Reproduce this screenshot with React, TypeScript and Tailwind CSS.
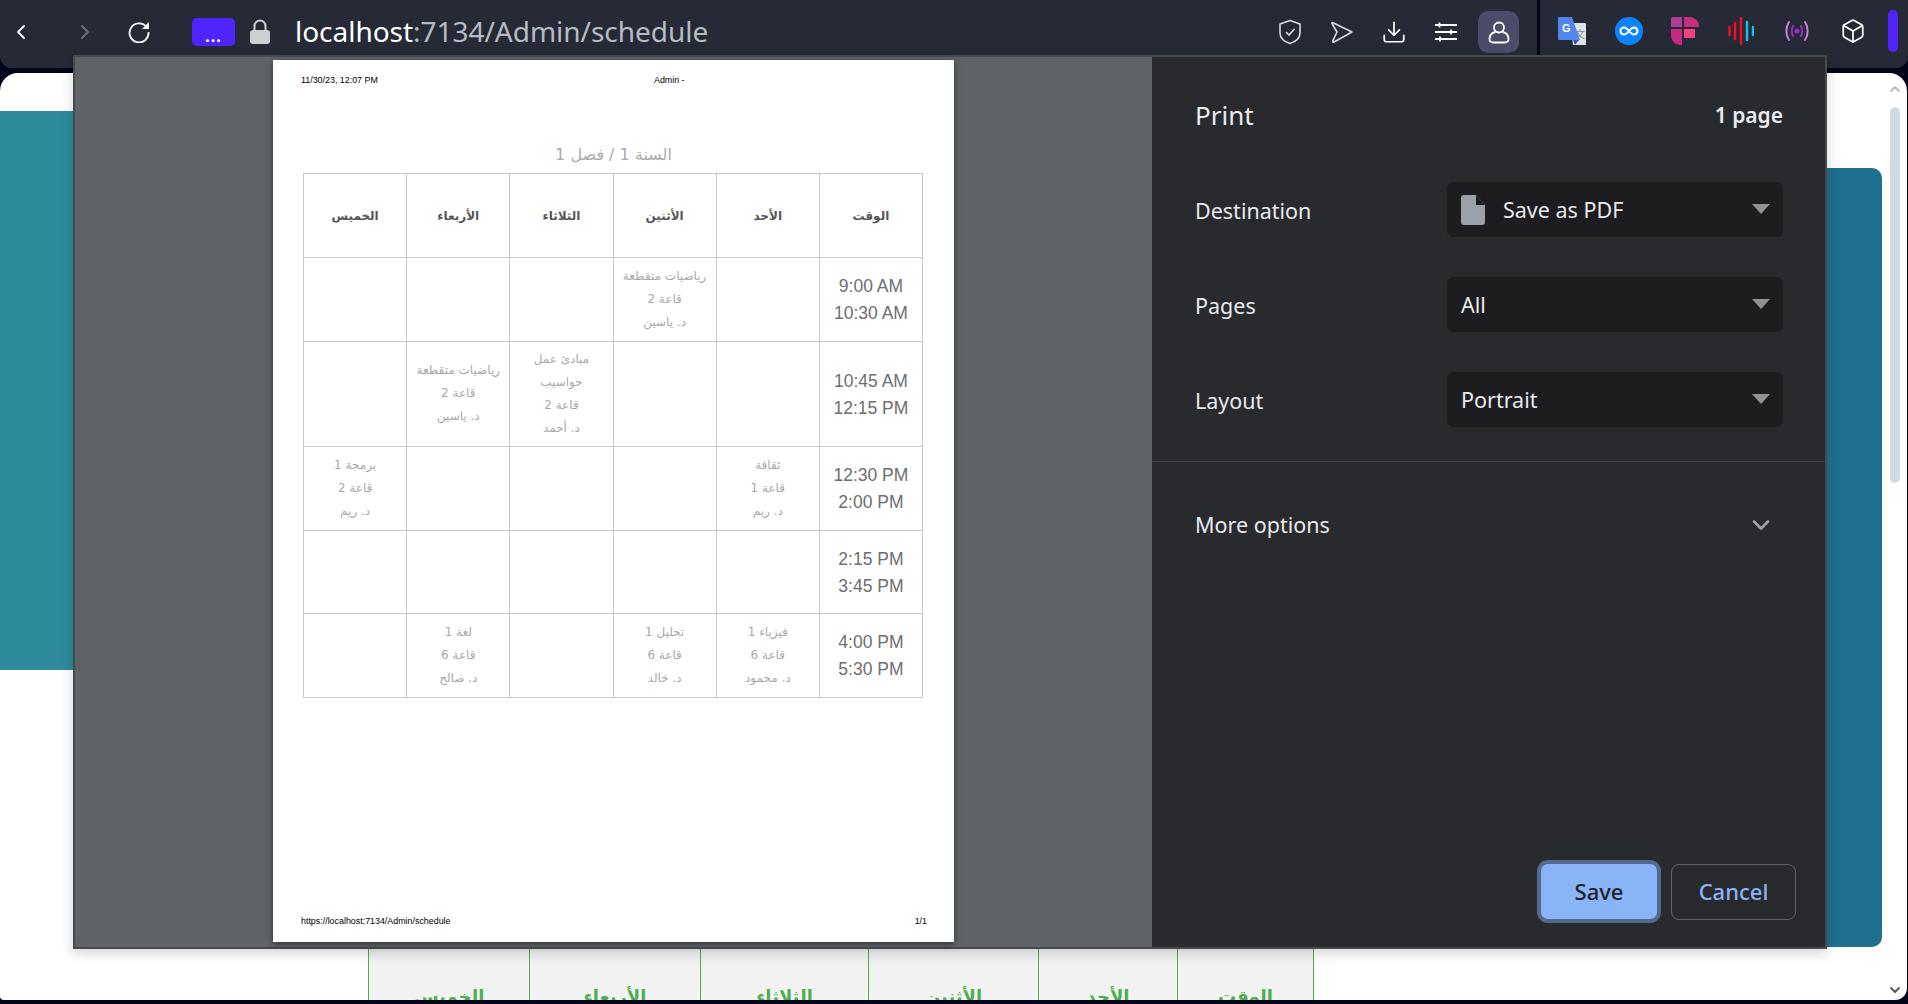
import { Box, ChevronDown, ChevronLeft, ChevronRight, ChevronUp, Download } from "lucide-react";

interface IRow {
  from: string;
  to: string;
  height: string;
  cells: string[][];
}

const days = ["الوقت", "الأحد", "الأثنين", "الثلاثاء", "الأربعاء", "الخميس"];

const rows: IRow[] = [
  {
    from: "9:00 AM",
    to: "10:30 AM",
    height: "h-[84px]",
    cells: [[], ["رياضيات متقطعة", "قاعة 2", "د. ياسين"], [], [], []],
  },
  {
    from: "10:45 AM",
    to: "12:15 PM",
    height: "h-[105px]",
    cells: [[], [], ["مبادئ عمل", "حواسيب", "قاعة 2", "د. أحمد"], ["رياضيات متقطعة", "قاعة 2", "د. ياسين"], []],
  },
  {
    from: "12:30 PM",
    to: "2:00 PM",
    height: "h-[84px]",
    cells: [["ثقافة", "قاعة 1", "د. ريم"], [], [], [], ["برمجة 1", "قاعة 2", "د. ريم"]],
  },
  {
    from: "2:15 PM",
    to: "3:45 PM",
    height: "h-[83px]",
    cells: [[], [], [], [], []],
  },
  {
    from: "4:00 PM",
    to: "5:30 PM",
    height: "h-[84px]",
    cells: [["فيزياء 1", "قاعة 6", "د. محمود"], ["تحليل 1", "قاعة 6", "د. خالد"], [], ["لغة 1", "قاعة 6", "د. صالح"], []],
  },
];

const bottomHeads = [
  { label: "الوقت", width: "w-[136px]" },
  { label: "الأحد", width: "w-[139px]" },
  { label: "الأثنين", width: "w-[170px]" },
  { label: "الثلاثاء", width: "w-[168px]" },
  { label: "الأربعاء", width: "w-[171px]" },
  { label: "الخميس", width: "w-[161px]" },
];

const Toolbar = () => (
  <div className="flex h-[68px] w-full gap-[3px]">
    <div className="flex h-full w-[1537px] items-center rounded-br-[10px] rounded-bl-[12px] bg-[#262a36] pb-[4px]">
      <ChevronLeft className="ml-[9px] h-[24px] w-[24px] text-white" strokeWidth={1.8} />
      <ChevronRight className="ml-[40px] h-[24px] w-[24px] text-[#70747c]" strokeWidth={1.8} />
      <svg className="ml-[31px] h-[22px] w-[22px]" viewBox="0 0 22 22" fill="none">
        <path d="M18.5 6A9.5 9.5 0 1 0 20.5 11" stroke="#ffffff" strokeWidth="1.8" />
        <path d="M21 1v7h-7z" fill="#ffffff" />
      </svg>
      <div className="ml-[42px] flex h-[28px] w-[43px] items-end justify-center rounded-[5px] bg-[#4f24ff] pb-[2px] text-[16px] leading-[16px] font-bold tracking-[1px] text-white">
        ...
      </div>
      <svg className="ml-[14px] h-[26px] w-[22px]" viewBox="0 0 22 26">
        <path d="M5.5 12V7a5.5 5.5 0 0 1 11 0v5" fill="none" stroke="#cdd1d3" strokeWidth="2" />
        <rect x="1" y="11" width="20" height="14" rx="3" fill="#cdd1d3" />
      </svg>
      <div className="mt-[-2px] ml-[24px] font-['Noto_Sans',sans-serif] text-[28px] leading-[36px] tracking-[-0.03px] text-[#b4bcc4]">
        <span className="text-white">localhost</span>:7134/Admin/schedule
      </div>
      <svg className="ml-auto h-[26px] w-[24px]" viewBox="0 0 24 26" fill="none" stroke="#d9dbde" strokeWidth="1.6">
        <path d="M12 1.5 22 5v9c0 5-4 8.5-10 10.5C6 22.5 2 19 2 14V5z" strokeLinejoin="round" />
        <path d="m8 13 3 3 5.5-6" />
      </svg>
      <svg className="ml-[28px] h-[24px] w-[24px]" viewBox="0 0 24 24" fill="none" stroke="#d9dbde" strokeWidth="1.6">
        <path d="M2.5 2.5 22 12 4 22c-1 .4-1.6-.4-1.2-1.2L7 12 2 3.5c-.3-.7 0-1.2.5-1z" strokeLinejoin="round" />
      </svg>
      <Download className="ml-[27px] h-[26px] w-[26px] text-white" strokeWidth={1.6} />
      <svg className="ml-[27px] h-[24px] w-[24px]" viewBox="0 0 24 24" stroke="#ffffff" strokeWidth="1.8">
        <path d="M1 5h22M1 12h22M1 19h22M5.5 2.5v5M17 9.5v5M6 16.5v5" />
      </svg>
      <div className="mr-[18px] ml-[20px] flex h-[42px] w-[41px] items-center justify-center rounded-[10px] bg-[#4a4c69]">
        <svg className="h-[23px] w-[22px]" viewBox="0 0 22 23" fill="none" stroke="#ffffff" strokeWidth="1.8">
          <circle cx="11" cy="6.5" r="5" />
          <path d="M7.5 11C3 12 1.5 14 1.5 18c0 2.5 1.5 3.5 4 3.5h11c2.5 0 4-1 4-3.5 0-4-1.5-6-6-7" />
        </svg>
      </div>
    </div>
    <div className="flex h-full flex-1 items-center rounded-b-[12px] bg-[#262a36] pb-[6px]">
      <svg className="ml-[18px] h-[28px] w-[28px]" viewBox="0 0 28 28">
        <path d="M12 6h15a1 1 0 0 1 1 1v20a1 1 0 0 1-1 1H15z" fill="#dfe3e6" />
        <path d="M1 0h13l8 23H1a1 1 0 0 1-1-1V1a1 1 0 0 1 1-1z" fill="#4f86ec" />
        <path d="M15 23h6l-4 5z" fill="#3c4fc4" />
        <text x="4" y="15" fontFamily="Liberation Sans" fontSize="11" fontWeight="700" fill="#ffffff">G</text>
        <text x="17" y="21" fontFamily="Noto Sans CJK SC" fontSize="10" fill="#7d8f99">文</text>
      </svg>
      <svg className="ml-[29px] h-[28px] w-[28px]" viewBox="0 0 28 28" fill="none">
        <circle cx="14" cy="14" r="14" fill="#0a84ff" />
        <path d="M14 14c-2-2.5-3.5-3.5-5-3.5a3.5 3.5 0 0 0 0 7c1.5 0 3-1 5-3.5s3.5-3.5 5-3.5a3.5 3.5 0 0 1 0 7c-1.5 0-3-1-5-3.5z" stroke="#ffffff" strokeWidth="2" />
      </svg>
      <svg className="ml-[28px] h-[28px] w-[28px]" viewBox="0 0 28 28">
        <path d="M2 0h9v10H0V2a2 2 0 0 1 2-2z" fill="#ad3d96" />
        <path d="M13 0h6a9 9 0 0 1 9 9v1H13z" fill="#c92d80" />
        <path d="M0 12h11v16h-1C4 28 0 24 0 18z" fill="#c42b80" />
        <path d="M13 12h11v9H13z" fill="#f4407f" />
      </svg>
      <svg className="ml-[29px] h-[28px] w-[26px]" viewBox="0 0 26 28" strokeWidth="2.5" strokeLinecap="round">
        <path d="M1.5 10v8M7 6v16M13 1v26" stroke="#f20c1c" />
        <path d="M19 5v18M25 10v8" stroke="#18c0ec" />
      </svg>
      <svg className="ml-[31px] h-[22px] w-[24px]" viewBox="0 0 24 22" fill="none" strokeWidth="2" strokeLinecap="round">
        <path d="M4 2C.5 7 .5 15 4 20M20 2c3.5 5 3.5 13 0 18" stroke="#c77fe0" />
        <path d="M8 6c-1.5 3-1.5 7 0 10M16 6c1.5 3 1.5 7 0 10" stroke="#9a2fc0" />
        <circle cx="12" cy="11" r="1.5" fill="#9a2fc0" stroke="#9a2fc0" />
      </svg>
      <Box className="ml-[31px] h-[26px] w-[26px] text-white" strokeWidth={1.6} />
      <div className="ml-[22px] h-[42px] w-[10px] rounded-[5px] bg-[#4f24ff]" />
    </div>
  </div>
);

const BackgroundPage = () => (
  <div className="mx-0 mt-[5px] flex h-[927px] w-[1907px] overflow-hidden rounded-t-[18px] rounded-br-[12px] rounded-bl-[4px] bg-white">
    <div className="flex w-[1882px] flex-col">
      <div className="flex h-[875px] w-full items-start justify-between">
        <div className="mt-[38px] h-[559px] w-[74px] bg-[#2e8b9c]" />
        <div className="mt-[95px] h-[779px] w-[100px] rounded-tr-[10px] rounded-br-[10px] bg-[#1f6f8f]" />
      </div>
      <div className="ml-[368px] flex h-[52px] w-[946px] overflow-hidden border-l border-[#4caf50]">
        {[...bottomHeads].reverse().map((head) => (
          <div
            key={head.label}
            dir="rtl"
            className={`${head.width} flex h-[70px] justify-center border-r border-[#4caf50] bg-[#f2f2f2] pt-[37px] font-['DejaVu_Sans',sans-serif] text-[18px] leading-[24px] font-bold text-[#4caf50]`}
          >
            {head.label}
          </div>
        ))}
      </div>
    </div>
    <div className="flex flex-1 flex-col items-center pt-[8px]">
      <ChevronUp className="h-[16px] w-[16px] text-[#b8bec4]" strokeWidth={3} />
      <div className="mt-[10px] h-[376px] w-[10px] rounded-[5px] bg-[#d0dae3]" />
      <ChevronDown className="mt-auto mb-[2px] h-[16px] w-[16px] text-[#555a60]" strokeWidth={3} />
    </div>
  </div>
);

const Paper = () => (
  <div className="flex h-[882px] w-[681px] flex-col bg-white px-[28px] font-['Liberation_Sans',sans-serif] shadow-[0_2px_6px_rgba(0,0,0,0.5)]">
    <div className="mt-[14px] flex h-[12px] items-center text-[8.9px] leading-[12px] text-black">
      <span className="w-[353px]">11/30/23, 12:07 PM</span>
      <span>Admin -</span>
    </div>
    <div dir="rtl" className="mt-[56px] h-[25px] text-center font-['DejaVu_Sans',sans-serif] text-[16px] leading-[25px] text-[#aaaaaa]">
      السنة 1 / فصل 1
    </div>
    <table dir="rtl" className="mt-[6px] ml-[2px] w-[620px] table-fixed border-collapse border border-[#c8c8c8]">
      <thead>
        <tr className="h-[84px]">
          {days.map((day) => (
            <th key={day} className="border border-[#c8c8c8] p-0 text-center font-['DejaVu_Sans',sans-serif] text-[12px] font-bold text-[#555555]">
              {day}
            </th>
          ))}
        </tr>
      </thead>
      <tbody>
        {rows.map((row) => (
          <tr key={row.from} className={row.height}>
            <td dir="ltr" className="border border-[#c8c8c8] p-0 pt-[1px] text-center text-[17.5px] leading-[27px] text-[#6e6e6e]">
              {row.from}
              <br />
              {row.to}
            </td>
            {row.cells.map((lines, index) => (
              <td key={index} className="border border-[#c8c8c8] p-0 pb-[1px] text-center font-['DejaVu_Sans',sans-serif] text-[12px] leading-[23px] text-[#a8a8a8]">
                {lines.map((line) => (
                  <div key={line}>{line}</div>
                ))}
              </td>
            ))}
          </tr>
        ))}
      </tbody>
    </table>
    <div className="mt-auto mr-[-1px] mb-[15px] flex h-[12px] items-center justify-between text-[8.9px] leading-[12px] text-black">
      <span>https://localhost:7134/Admin/schedule</span>
      <span>1/1</span>
    </div>
  </div>
);

const SelectRow = ({ label, value, icon }: { label: string; value: string; icon?: boolean }) => (
  <div className="flex h-[55px] items-center justify-between">
    <span className="pt-[3px] text-[21.5px] leading-[30px] text-[#e8eaed]">{label}</span>
    <div className="flex h-[55px] w-[336px] items-center rounded-[6px] bg-[#1d1d1f] pr-[13px] pl-[14px] text-[21.5px] leading-[30px] text-[#e8eaed]">
      {icon && (
        <svg className="mr-[18px] h-[30px] w-[24px]" viewBox="0 0 24 30">
          <path d="M3 0h12l9 10v17a3 3 0 0 1-3 3H3a3 3 0 0 1-3-3V3a3 3 0 0 1 3-3z" fill="#9aa0a6" />
          <path d="M15 0v10h9z" fill="#1d1d1f" />
        </svg>
      )}
      <span>{value}</span>
      <div className="mt-[-2px] ml-auto h-0 w-0 border-x-[9px] border-t-[10px] border-x-transparent border-t-[#8f9296]" />
    </div>
  </div>
);

const PrintDialog = () => (
  <div className="absolute top-[55px] left-[73px] flex h-[894px] w-[1754px] border-2 border-[#48494c] font-['Noto_Sans',sans-serif] shadow-[0_4px_12px_rgba(0,0,0,0.18)]">
    <div className="flex w-[1077px] justify-center bg-[#5f6368] pt-[3px]">
      <Paper />
    </div>
    <div className="flex flex-1 flex-col bg-[#292a2d]">
      <div className="flex flex-col border-b border-[#3f4043] pr-[42px] pb-[34px] pl-[43px]">
        <div className="mt-[40px] flex h-[36px] items-center justify-between">
          <span className="text-[26px] leading-[36px] text-[#e8eaed]">Print</span>
          <span className="text-[21px] leading-[30px] font-semibold text-[#e8eaed]">1 page</span>
        </div>
        <div className="mt-[49px] flex flex-col gap-[40px]">
          <SelectRow label="Destination" value="Save as PDF" icon />
          <SelectRow label="Pages" value="All" />
          <SelectRow label="Layout" value="Portrait" />
        </div>
      </div>
      <div className="mt-[48px] flex h-[30px] items-center justify-between pr-[50px] pl-[43px]">
        <span className="text-[21.5px] leading-[30px] text-[#e8eaed]">More options</span>
        <ChevronDown className="h-[28px] w-[28px] text-[#9aa0a6]" strokeWidth={2.4} />
      </div>
      <div className="mt-auto mr-[29px] mb-[24px] flex items-center justify-end gap-[10px]">
        <button className="h-[63px] w-[124px] rounded-[11px] border-[4px] border-[#55698f] bg-[#8ab4f8] text-[22px] font-medium text-[#202124]">
          Save
        </button>
        <button className="h-[56px] w-[125px] rounded-[8px] border border-[#5f6368] text-[22px] font-medium text-[#8ab4f8]">
          Cancel
        </button>
      </div>
    </div>
  </div>
);

export default function App() {
  return (
    <div className="relative h-[1004px] w-[1908px] overflow-hidden bg-[#05051a]">
      <Toolbar />
      <BackgroundPage />
      <PrintDialog />
    </div>
  );
}
